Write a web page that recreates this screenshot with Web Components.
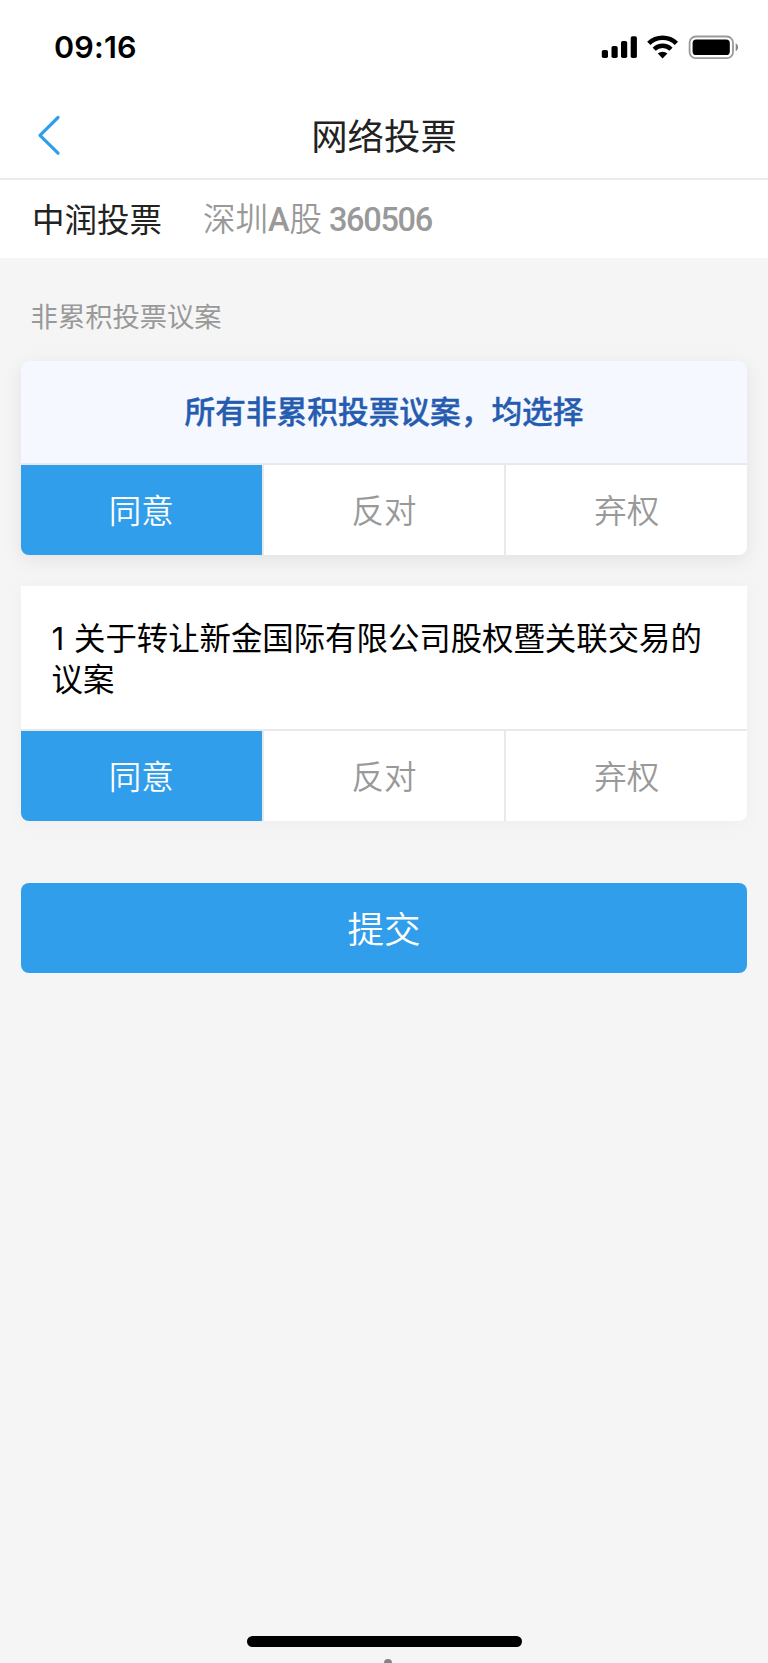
<!DOCTYPE html>
<html lang="zh-CN">
<head>
<meta charset="utf-8">
<title>网络投票</title>
<style>
html, body { margin: 0; }
body { background: #f5f5f5; font-family: "Noto Sans CJK SC", sans-serif; color: #222; }
</style>
</head>
<body>
<vote-app></vote-app>
<script>
function define(name, html) {
  const template = document.createElement('template');
  template.innerHTML = html;
  customElements.define(name, class extends HTMLElement {
    constructor() {
      super();
      this.attachShadow({ mode: 'open' }).append(template.content.cloneNode(true));
    }
  });
}

define('status-bar', `
<style>
:host { display: flex; height: 94px; box-sizing: border-box; padding: 0 29px 0 54px; justify-content: space-between; align-items: center; background: #fff; color: #000; }
time { font: 600 30.5px/36px Inter, sans-serif; letter-spacing: .2px; }
svg { display: block; }
</style>
<time>09:16</time>
<svg width="138" height="26" viewBox="0 0 138 26">
  <rect x="0.8" y="16" width="6.2" height="8" rx="1.8"/>
  <rect x="10.5" y="12" width="6.2" height="12" rx="1.8"/>
  <rect x="20" y="7" width="6.2" height="17" rx="1.8"/>
  <rect x="29.7" y="2.2" width="6.2" height="21.8" rx="1.8"/>
  <path d="M47.8 9.4a19.5 19.5 0 0 1 27.6 0" fill="none" stroke="#000" stroke-width="4.6"/>
  <path d="M53.2 15.2a12 12 0 0 1 16.8 0" fill="none" stroke="#000" stroke-width="4.4"/>
  <path d="M56.8 19.6a7 7 0 0 1 9.6 0L61.6 24.5z"/>
  <rect x="88.6" y="2.5" width="43.4" height="21.6" rx="6.2" fill="none" stroke="#999" stroke-width="1.8"/>
  <rect x="91.6" y="5.6" width="37.2" height="15.4" rx="3.6"/>
  <path d="M134.7 9.2c3.2 1.4 3.2 6.6 0 8z" fill="#888"/>
</svg>`);

define('nav-bar', `
<style>
:host { display: grid; grid-template-columns: 80px 1fr 80px; align-items: center; height: 86px; box-sizing: border-box; border-bottom: 2px solid #ebebeb; background: #fff; }
svg { display: block; margin: 0 0 2px 36px; }
h1 { margin: 0; padding-bottom: 4px; font-size: 36.4px; font-weight: 400; line-height: 40px; text-align: center; color: #222; }
</style>
<svg width="26" height="42" viewBox="0 0 26 42"><path d="M22 3.5 4 21.3 22 39.2" fill="none" stroke="#309eea" stroke-width="3.2" stroke-linecap="round" stroke-linejoin="round"/></svg>
<h1><slot></slot></h1>`);

define('stock-info', `
<style>
:host { display: flex; align-items: center; gap: 41px; height: 78px; box-sizing: border-box; padding: 0 32px 3px; background: #fff; font-size: 32.5px; line-height: 40px; color: #222; }
.code { padding-top: 2px; color: #999; white-space: pre; font-weight: 350; }
::slotted(b) { font-family: Roboto, sans-serif; font-weight: 500; letter-spacing: -1.3px; }
::slotted(b.market) { letter-spacing: 0; }
</style>
<span><slot name="name"></slot></span><span class="code"><slot></slot></span>`);

define('vote-option', `
<style>
:host { display: flex; align-items: center; justify-content: center; height: 90px; box-sizing: border-box; padding-bottom: 3px; font-size: 32.5px; font-weight: 350; line-height: 40px; color: #999; background: #fff; }
:host([selected]) { background: #309eea; color: #fff; }
</style>
<span><slot></slot></span>`);

define('vote-card', `
<style>
:host { display: block; overflow: hidden; border-radius: 0 0 8px 8px; background: #e9e9e9; box-shadow: 0 2px 20px rgba(0,0,0,.03); }
:host([summary]) { border-radius: 8px; box-shadow: 0 5px 20px rgba(0,0,0,.08); }
.head { box-sizing: border-box; height: 143px; margin-bottom: 2px; padding: 33px 30px 0 31px; background: #fff; color: #000; font-family: Inter, "Noto Sans CJK SC", sans-serif; font-size: 31.4px; line-height: 41px; word-spacing: .8px; }
:host([summary]) .head { height: 102.5px; padding: 28px 0 0; text-align: center; background: #f5f8ff; color: #265cb0; font-family: "Noto Sans CJK SC", sans-serif; font-size: 30.7px; font-weight: 500; -webkit-text-stroke: .4px #265cb0; }
.options { display: grid; grid-template-columns: 241.3px 1fr 241.4px; gap: 2px; }
</style>
<div class="head"><slot name="title"></slot></div>
<div class="options"><vote-option selected>同意</vote-option><vote-option>反对</vote-option><vote-option>弃权</vote-option></div>`);

define('submit-button', `
<style>
:host { display: block; }
button { display: block; width: 100%; height: 90px; border: 0; border-radius: 8px; padding: 0 0 1px; background: #309eea; color: #fff; font: 350 36.6px/40px "Noto Sans CJK SC", sans-serif; }
</style>
<button><slot></slot></button>`);

define('home-indicator', `
<style>
:host { display: flex; flex-direction: column; align-items: center; height: 27px; overflow: hidden; }
.bar { width: 275px; height: 10.5px; flex: none; border-radius: 6px; background: #000; }
.dot { width: 8px; height: 8px; flex: none; margin: 12px 0 0 7px; border-radius: 50%; background: #848484; }
</style>
<div class="bar"></div><div class="dot"></div>`);

define('vote-app', `
<style>
:host { display: flex; flex-direction: column; height: 1663px; overflow: hidden; background: #f5f5f5; }
main { flex: 1; padding: 37px 20.6px 0; }
h2 { margin: 0 0 25.5px 10px; font-size: 27.3px; font-weight: 400; line-height: 40px; color: #999; }
.item { margin-top: 31px; }
submit-button { margin-top: 62px; }
home-indicator { flex: none; }
</style>
<status-bar></status-bar>
<nav-bar>网络投票</nav-bar>
<stock-info><span slot="name">中润投票</span>深圳<b class="market">A</b>股<b> 360506</b></stock-info>
<main>
  <h2>非累积投票议案</h2>
  <vote-card summary><span slot="title">所有非累积投票议案，均选择</span></vote-card>
  <vote-card class="item"><span slot="title">1 关于转让新金国际有限公司股权暨关联交易的议案</span></vote-card>
  <submit-button>提交</submit-button>
</main>
<home-indicator></home-indicator>`);
</script>
</body>
</html>
